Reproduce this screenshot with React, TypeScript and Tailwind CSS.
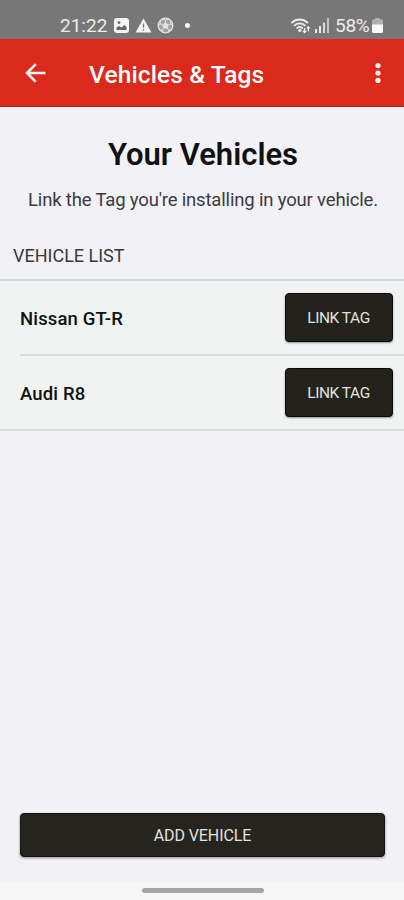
import React from 'react';

const vehicles = [
  { id: 1, name: 'Nissan GT-R' },
  { id: 2, name: 'Audi R8' },
];

const StatusBar: React.FC = () => (
  <div className="flex h-[39px] shrink-0 items-center justify-between bg-[#777777] pt-3 pr-[21px] pl-[60px] text-[#ededed]">
    <div className="flex items-center">
      <span className="w-[54px] text-[19px] leading-none whitespace-nowrap">21:22</span>
      {/* Gallery */}
      <svg width="15" height="15" viewBox="0 0 15 15">
        <rect width="15" height="15" rx="3" fill="#f4f4f4" />
        <circle cx="5" cy="4.6" r="1.4" fill="#666" />
        <path d="M2.5 12V9.5L5 8l2.5 1.6L10.5 7l2 2V12z" fill="#666" />
      </svg>
      {/* Warning */}
      <svg className="ml-[6px]" width="17" height="15" viewBox="0 0 17 15">
        <path d="M8.5.5 16.5 14.5H.5z" fill="#f4f4f4" />
        <path d="M8.5 5.5v4.2M8.5 11v1.4" stroke="#777" strokeWidth="1.3" />
      </svg>
      {/* Ball */}
      <svg className="ml-[5px]" width="17" height="17" viewBox="0 0 17 17" fill="none" stroke="#e4e4e4">
        <circle cx="8.5" cy="8.5" r="7.3" fill="#a2a2a2" strokeWidth="1.3" />
        <path d="m8.5 5.8 2.7 2-1 3.2H6.8l-1-3.2z" fill="#dedede" />
        <path d="M8.5 5.8V3L5.2 1.9M8.5 3l3.3-1.1M11.2 7.8l2.6-.9 1.9 2M13.8 6.9l-.3-3.2M10.2 11l1.7 2.2-1 2.3M11.9 13.2l2.9-.5M6.8 11l-1.7 2.2 1 2.3M5.1 13.2l-2.9-.5M5.8 7.8l-2.6-.9-1.9 2M3.2 6.9l.3-3.2" strokeWidth=".9" />
      </svg>
      <span className="ml-[11px] size-[5px] rounded-full bg-[#f4f4f4]" />
    </div>
    <div className="flex items-center">
      {/* Wifi with traffic arrows */}
      <svg width="20" height="16" viewBox="0 0 20 16" fill="none" stroke="#ececec" strokeLinecap="round">
        <path d="M1 4.6C5.2.5 12.2.5 16.4 4.6M3.6 7.4c2.9-2.7 7.3-2.7 10.2 0M6.2 10c1.5-1.3 3.6-1.3 5 0" strokeWidth="1.9" />
        <circle cx="8.8" cy="12.4" r="1.2" fill="#ececec" />
        <path d="M13.6 14.4v-4m-1.3 2.8 1.3 1.3 1.2-1.3M17.3 8.8v4m-1.2-2.7 1.2-1.3 1.3 1.3" strokeWidth="1.3" />
      </svg>
      {/* Signal */}
      <svg className="ml-[4px]" width="14" height="15" viewBox="0 0 14 15" fill="#ececec">
        <rect y="11" width="2" height="4" rx=".6" />
        <rect x="4" y="8" width="2" height="7" rx=".6" />
        <rect x="8" y="4.5" width="2" height="10.5" rx=".6" fill="#dadada" />
        <rect x="12" y="0" width="2" height="15" rx=".6" fill="#c4c4c4" />
      </svg>
      <span className="ml-[6px] w-[37px] text-[19px] leading-none tracking-[-0.3px] whitespace-nowrap">58%</span>
      {/* Battery */}
      <svg width="11" height="15" viewBox="0 0 11 15">
        <path d="M3 1.3C3 .5 3.5 0 4 0h3c.6 0 1 .5 1 1.3h1.2c1 0 1.8.8 1.8 1.8V7H0V3.1c0-1 .8-1.8 1.8-1.8z" fill="#b0b0b0" />
        <path d="M0 6.5h11v6.7c0 1-.8 1.8-1.8 1.8H1.8C.8 15 0 14.2 0 13.2z" fill="#fafafa" />
      </svg>
    </div>
  </div>
);

const Header: React.FC = () => (
  <header className="flex h-[68px] shrink-0 items-center border-b border-[#c41e14] bg-[#db291c] pr-[23.5px] pl-[25px] text-white">
    <button type="button" aria-label="Back">
      <svg width="21" height="20" viewBox="0 0 21 20" fill="none" stroke="#fff3f0" strokeWidth="2.6">
        <path d="M20.5 10H2.5M10.8 1.2 2 10l8.8 8.8" />
      </svg>
    </button>
    <h1 className="ml-[43px] pt-[5px] text-[24.5px] font-medium tracking-[0.13px] whitespace-nowrap">Vehicles &amp; Tags</h1>
    <button type="button" aria-label="More" className="ml-auto">
      <svg width="6" height="20" viewBox="0 0 6 20" fill="#fff6f3">
        <circle cx="3" cy="2.6" r="2.6" />
        <circle cx="3" cy="10" r="2.6" />
        <circle cx="3" cy="17.4" r="2.6" />
      </svg>
    </button>
  </header>
);

const LinkButton: React.FC = () => (
  <button
    type="button"
    className="h-[49px] w-[108px] rounded-[4px] border border-[#0b0b08] bg-[#23221d] pt-[3px] text-[15.5px] tracking-[-0.45px] text-[#e2e2df] shadow-[0_1px_2px_rgba(0,0,0,0.4)]"
  >
    LINK TAG
  </button>
);

export default function App() {
  return (
    <div className="flex h-[900px] w-[404px] flex-col overflow-hidden bg-[#f2f1f6] font-[Roboto,sans-serif] text-[#111]">
      <StatusBar />
      <Header />

      <main className="flex flex-1 flex-col">
        <h2 className="mt-[29px] pl-[2px] text-center text-[31px] leading-[38px] font-semibold whitespace-nowrap">
          Your Vehicles
        </h2>
        <p className="mt-[14px] pl-[2px] text-center text-[18.5px] leading-6 tracking-[-0.17px] whitespace-nowrap text-[#3b3b3f]">
          Link the Tag you're installing in your vehicle.
        </p>
        <h3 className="mt-8 pl-[13px] text-[18px] leading-6 text-[#38383c]">VEHICLE LIST</h3>

        <ul className="mt-[11px] border-y-2 border-[#d9dadb] bg-[#f0f3f2]">
          {vehicles.map((vehicle, i) => (
            <li key={vehicle.id} className="pl-5">
              <div className={`flex items-center justify-between pr-[11.5px] ${i > 0 ? 'h-[75px] border-t-2 border-[#d9dadb]' : 'h-[73px]'}`}>
                <span className="pt-[4px] text-[18.5px] font-medium tracking-[0.15px]">{vehicle.name}</span>
                <LinkButton />
              </div>
            </li>
          ))}
        </ul>

        <button
          type="button"
          className="mx-5 mt-auto mb-[25px] h-11 w-[365px] rounded-[4px] border border-[#12120e] bg-[#25241f] pt-[2px] text-[16px] tracking-[-0.1px] text-[#e2e2df] shadow-[0_1px_3px_rgba(0,0,0,0.4)]"
        >
          ADD VEHICLE
        </button>
      </main>

      {/* Gesture bar */}
      <div className="flex h-[18px] shrink-0 justify-center bg-[#f6f6f6] pt-[6px] pl-px">
        <div className="h-[5px] w-[122px] rounded-full bg-[#a5a5a5]" />
      </div>
    </div>
  );
}
